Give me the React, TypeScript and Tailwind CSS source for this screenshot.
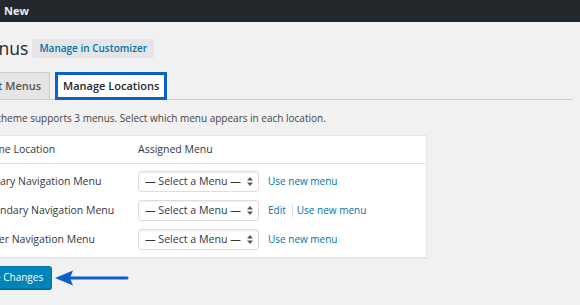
import React from "react";

function Arrows() {
  return (
    <svg width="6" height="9" viewBox="0 0 6 9" className="shrink-0">
      <path d="M3 0 L6 3.5 L0 3.5 Z" fill="#555" />
      <path d="M3 9 L6 5.5 L0 5.5 Z" fill="#555" />
    </svg>
  );
}

function Select() {
  return (
    <div className="w-[121px] h-[21px] shrink-0 flex items-center justify-between border border-[#ddd] rounded-[3px] bg-white shadow-[inset_0_1px_2px_rgba(0,0,0,0.07)] pl-[6px] pr-[5px] text-[10.6px] text-[#32373c]">
      <span>— Select a Menu —</span>
      <Arrows />
    </div>
  );
}

function Row({ label, edit }: { label: string; edit?: boolean }) {
  return (
    <div className="flex items-center h-[21px]">
      <div className="w-[164px] shrink-0 pl-[3px] text-[10.5px] text-[#32373c]">{label}</div>
      <Select />
      <div className="flex items-center ml-[9px] text-[10px] text-[#0073aa]">
        {edit && (
          <>
            <span>Edit</span>
            <span className="ml-[6px] mr-[4px] w-px h-[13px] bg-[#ddd]" />
          </>
        )}
        <span>Use new menu</span>
      </div>
    </div>
  );
}

export default function App() {
  return (
    <div className="w-[580px] h-[305px] overflow-hidden bg-[#f1f1f1] font-['Open_Sans',sans-serif]">
      <div className="h-[22px] bg-[#23282d] flex items-center pl-[4px] text-[11px] font-bold text-[#eee]">
        New
      </div>
      <div className="-ml-[27px] w-[600px]">
        <div className="flex items-center mt-[16px] h-[20px]">
          <h1 className="text-[17.5px] leading-[20px] text-[#23282d]">Menus</h1>
          <span className="ml-[4px] h-[19px] flex items-center px-[7px] bg-[#e5e5e5] rounded-[2px] text-[10px] font-semibold text-[#0073aa]">
            Manage in Customizer
          </span>
        </div>
        <div className="mt-[14px] h-[28px] flex items-end border-b border-[#ccc]">
          <div className="h-[27px] flex items-center px-[8px] bg-[#e5e5e5] border border-b-0 border-[#ccc] text-[11px] font-semibold text-[#555]">
            Edit Menus
          </div>
          <div className="ml-[5px] h-[28px] -mb-px flex items-center px-[5px] bg-white border-[3px] border-[#0b62c9] text-[11px] font-semibold text-[#23282d]">
            Manage Locations
          </div>
        </div>
        <p className="mt-[11px] text-[10px] leading-[14px] text-[#444]">
          Your theme supports 3 menus. Select which menu appears in each location.
        </p>
        <div className="mt-[10px] w-[454px] bg-white border border-[#e5e5e5] shadow-[0_1px_1px_rgba(0,0,0,0.04)]">
          <div className="h-[28px] flex items-center border-b border-[#e1e1e1] text-[10.5px] text-[#32373c]">
            <div className="w-[164px] pl-[3px]">Theme Location</div>
            <div>Assigned Menu</div>
          </div>
          <div className="flex flex-col gap-[8px] pt-[7px] pb-[7px]">
            <Row label="Primary Navigation Menu" />
            <Row label="Secondary Navigation Menu" edit />
            <Row label="Footer Navigation Menu" />
          </div>
        </div>
        <div className="mt-[8px] flex items-center -ml-[3px]">
          <div className="h-[23px] flex items-center px-[8px] bg-[#0085ba] border border-[#0073aa] rounded-[3px] shadow-[0_1px_0_#006799] text-[10px] text-white">
            Save Changes
          </div>
          <svg width="80" height="20" viewBox="0 0 80 20" className="ml-[2px]">
            <path d="M1 10 L19 2.5 L16 10 L19 17.5 Z" fill="#0a5fc8" />
            <line x1="16" y1="10" x2="73" y2="10" stroke="#0a5fc8" strokeWidth="3" strokeLinecap="round" />
          </svg>
        </div>
      </div>
    </div>
  );
}
